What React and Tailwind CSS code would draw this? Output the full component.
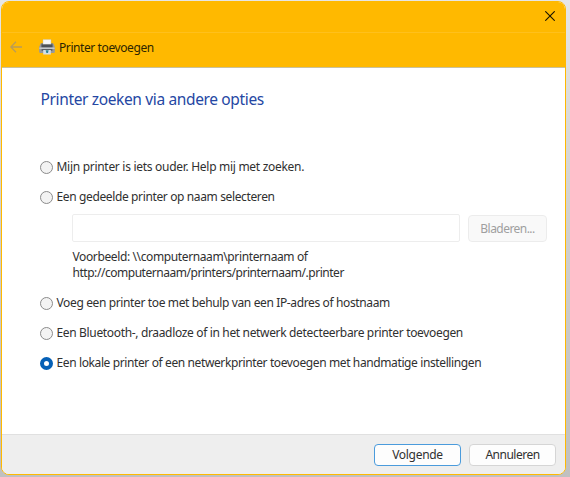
import React, { useState } from 'react';

const PrinterIcon = () => (
    <svg viewBox="0 0 16 16" className="w-4 h-4 shrink-0 -mt-0.5">
        <path d="M1.6 4.6h12.8L15.8 8v5.2l-.8.8H1l-.8-.8V8z" fill="#96999c" />
        <path d="M2.4 4.2h11.2v4H2.4z" fill="#6e7378" />
        <path d="M4 .6h8v4.8H4z" fill="#f6f7f8" stroke="#c4bda6" strokeWidth="0.4" />
        <path d="M2.6 5.4h10.8v3H2.6z" fill="#4c5157" />
        <path d="M.4 8.4h15.2v1.6H.4z" fill="#c3c8cc" />
        <path d="M2.6 10h10.8v1.8H2.6z" fill="#5a5f64" />
        <path d="M4.2 11h7.6v4.6H4.2z" fill="#d3dee6" />
        <path d="M6.6 11.2h3l-.6 2.8H7.4z" fill="#2f8596" />
    </svg>
);

const Radio = ({ value, selected, onSelect, className, labelClass, children }) => (
    <label className={`flex items-center h-4 w-max ${className}`}>
        <input
            type="radio"
            name="method"
            checked={selected === value}
            onChange={() => onSelect(value)}
            className="appearance-none relative top-[0.5px] w-[13px] h-[13px] mr-[3.5px] rounded-full border border-[#8b8b8b] bg-[#f3f3f3] checked:border-4 checked:border-[#0560b6] checked:bg-white"
        />
        <span className={labelClass}>{children}</span>
    </label>
);

const App = () => {
    const [method, setMethod] = useState('local');
    const [path, setPath] = useState('');

    return (
        <div className="w-[570px] h-[477px] overflow-hidden bg-linear-to-b from-[#e6e6e6] via-[#cfcfcf] to-[#c0c0c0] pt-px pl-px font-['Noto_Sans','Open_Sans',sans-serif] text-[12px] leading-4 text-[#303030] whitespace-nowrap">
            <div className="w-[565px] h-[474px] flex flex-col rounded-lg overflow-hidden bg-white border border-[#ffb900]">
                {/* Title bar */}
                <div className="h-[31px] shrink-0 bg-[#ffb900] border-b border-[#ffc01c] flex justify-end">
                    <button aria-label="Sluiten" className="w-[31px] h-full flex items-center justify-center">
                        <svg viewBox="0 0 10 10" className="w-[10px] h-[10px] -mt-[2px]" fill="none" stroke="#171300" strokeWidth="1.1">
                            <path d="M.3.3l9.4 9.4M9.7.3L.3 9.7" />
                        </svg>
                    </button>
                </div>
                <div className="h-[35px] shrink-0 bg-[#ffb900] border-b border-[#c9c19c] flex items-center pl-2 pb-1">
                    <svg viewBox="0 0 12 12" className="w-3 h-3 mr-[17px] -mt-0.5" fill="none" stroke="#b99c58" strokeWidth="1.3">
                        <path d="M12 6H.8M6 .8L.8 6 6 11.2" />
                    </svg>
                    <PrinterIcon />
                    <span className="ml-[4px] text-[#2e2500] tracking-[-0.41px]">Printer toevoegen</span>
                </div>

                <div className="flex-1 pl-[38px] pr-[18px]">
                    <h1 className="mt-[19px] ml-[0.5px] text-[15.5px] leading-6 text-[#2547a3] w-max tracking-[-0.36px]">Printer zoeken via andere opties</h1>

                    <Radio value="older" selected={method} onSelect={setMethod} className="mt-[48px]" labelClass="tracking-[-0.29px]">
                        Mijn printer is iets ouder. Help mij met zoeken.
                    </Radio>
                    <Radio value="shared" selected={method} onSelect={setMethod} className="mt-[14px]" labelClass="tracking-[-0.37px]">
                        Een gedeelde printer op naam selecteren
                    </Radio>
                    <div className="flex items-center ml-8 mt-[9px]">
                        <input
                            value={path}
                            onChange={(e) => setPath(e.target.value)}
                            disabled={method !== 'shared'}
                            className="w-[388px] h-7 px-2 border border-[#ededed] rounded-xs bg-white"
                        />
                        <button disabled={method !== 'shared'} className="w-[79px] h-[27px] ml-2 mt-px rounded border border-[#ececec] bg-[#f9f9f9] text-[#9f9f9f] tracking-[-0.55px]">
                            Bladeren...
                        </button>
                    </div>
                    <p className="ml-[32.5px] mt-[7px] w-max">
                        <span className="block w-max tracking-[-0.38px]">Voorbeeld: \\computernaam\printernaam of</span>
                        <span className="block w-max tracking-[-0.46px]">http://computernaam/printers/printernaam/.printer</span>
                    </p>
                    <Radio value="ip" selected={method} onSelect={setMethod} className="mt-[14px]" labelClass="tracking-[-0.37px]">
                        Voeg een printer toe met behulp van een IP-adres of hostnaam
                    </Radio>
                    <Radio value="bluetooth" selected={method} onSelect={setMethod} className="mt-[14px]" labelClass="tracking-[-0.34px]">
                        Een Bluetooth-, draadloze of in het netwerk detecteerbare printer toevoegen
                    </Radio>
                    <Radio value="local" selected={method} onSelect={setMethod} className="mt-[14px]" labelClass="tracking-[-0.385px]">
                        Een lokale printer of een netwerkprinter toevoegen met handmatige instellingen
                    </Radio>
                </div>

                {/* Footer */}
                <div className="h-[40px] shrink-0 bg-[#eeeeee] border-t border-[#e0e0e0] flex items-center justify-end gap-2 pr-[9px]">
                    <button className="w-[87px] h-[22px] rounded border border-[#4a9bdc] bg-[#fdfdfd] leading-5 tracking-[-0.3px]">Volgende</button>
                    <button className="w-[87px] h-[22px] rounded border border-[#d5d5d5] bg-[#fdfdfd] leading-5 tracking-[-0.5px]">Annuleren</button>
                </div>
            </div>
        </div>
    );
};

export default App;
